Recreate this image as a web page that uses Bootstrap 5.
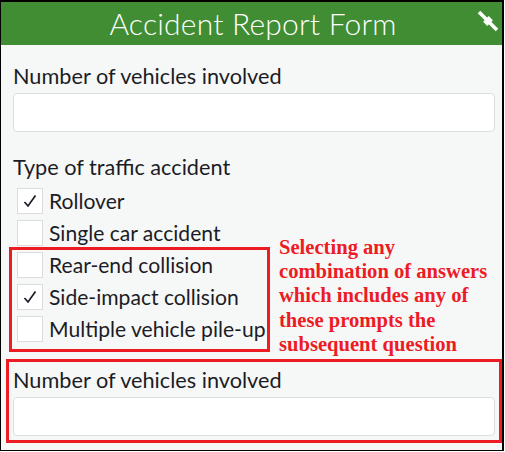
<!DOCTYPE html>
<html lang="en">
<head>
<meta charset="utf-8">
<title>Accident Report Form</title>
<link rel="stylesheet" href="https://cdn.jsdelivr.net/npm/bootstrap@5.3.0/dist/css/bootstrap.min.css">
<style>
html,body{margin:0;padding:0;background:#fff;}
body{width:505px;height:452px;overflow:hidden;font-family:"Lato","Noto Sans",sans-serif;color:#1c1c26;}
.frame{position:relative;width:504px;height:451px;border:1px solid #000;border-width:2px 2px 1px 1px;background:#f6f8f7;overflow:hidden;}
.head{height:43px;background:#408d33;color:#fff;font-size:30px;font-weight:300;line-height:43px;text-align:center;position:relative;letter-spacing:.2px;padding-left:3px;}
.sat{position:absolute;right:3px;top:8px;width:22px;height:22px;}
.formarea{padding:0 7px 0 12px;}
.qlabel{font-size:21.7px;line-height:24px;margin:0;}
.first{padding-top:19px;}
.answer{height:39px;margin-top:5px;background:#fff;border:1px solid #dedede;border-radius:4px;box-shadow:none;}
.answer:focus{border-color:#dedede;box-shadow:none;}
.qgroup{padding-top:23px;}
.opts{padding:6px 0 0 4px;}
.opt{height:32px;gap:6px;font-size:21.1px;line-height:26px;}
.cbox{width:26px;height:26px;flex:none;background:#fff;border:1px solid #dcdcdc;display:flex;align-items:center;justify-content:center;}
.lastq{padding-top:23px;}
.redbox{position:absolute;border:3px solid #ed1c24;}
.r1{left:8px;top:245px;width:261px;height:105px;}
.r2{left:5px;top:357px;width:496px;height:84px;}
.note{position:absolute;left:278px;top:233px;width:225px;margin:0;font-family:"Liberation Serif",serif;font-weight:700;font-size:20.6px;line-height:24.2px;color:#ed1c24;}
</style>
</head>
<body>
<div class="frame">
  <div class="head">Accident Report Form
    <svg class="sat" viewBox="0 0 22 22" aria-hidden="true"><path d="M2 2 L20 20" stroke="#fff" stroke-width="3.600" fill="none"/><path d="M15.900 10.300 L10.300 15.900 L6.100 11.700 L11.700 6.100 Z" fill="#fff"/></svg>
  </div>
  <form class="formarea">
    <div class="first">
      <label class="qlabel d-block">Number of vehicles involved</label>
      <input type="text" class="form-control answer">
    </div>
    <div class="qgroup">
      <div class="qlabel">Type of traffic accident</div>
      <div class="opts d-flex flex-column">
        <div class="opt d-flex align-items-center"><span class="cbox"><svg width="14" height="14" viewBox="0 0 14 14"><path d="M1.500 8 L5 12 L12.500 1.500" fill="none" stroke="#1c1c26" stroke-width="1.700"/></svg></span><span>Rollover</span></div>
        <div class="opt d-flex align-items-center"><span class="cbox"></span><span>Single car accident</span></div>
        <div class="opt d-flex align-items-center"><span class="cbox"></span><span>Rear-end collision</span></div>
        <div class="opt d-flex align-items-center"><span class="cbox"><svg width="14" height="14" viewBox="0 0 14 14"><path d="M1.500 8 L5 12 L12.500 1.500" fill="none" stroke="#1c1c26" stroke-width="1.700"/></svg></span><span>Side-impact collision</span></div>
        <div class="opt d-flex align-items-center"><span class="cbox"></span><span>Multiple vehicle pile-up</span></div>
      </div>
    </div>
    <div class="lastq">
      <label class="qlabel d-block">Number of vehicles involved</label>
      <input type="text" class="form-control answer">
    </div>
  </form>
  <div class="redbox r1"></div>
  <div class="redbox r2"></div>
  <p class="note">Selecting any<br>combination of answers<br>which includes any of<br>these prompts the<br>subsequent question</p>
</div>
<script src="https://cdn.jsdelivr.net/npm/bootstrap@5.3.0/dist/js/bootstrap.bundle.min.js"></script>
</body>
</html>
